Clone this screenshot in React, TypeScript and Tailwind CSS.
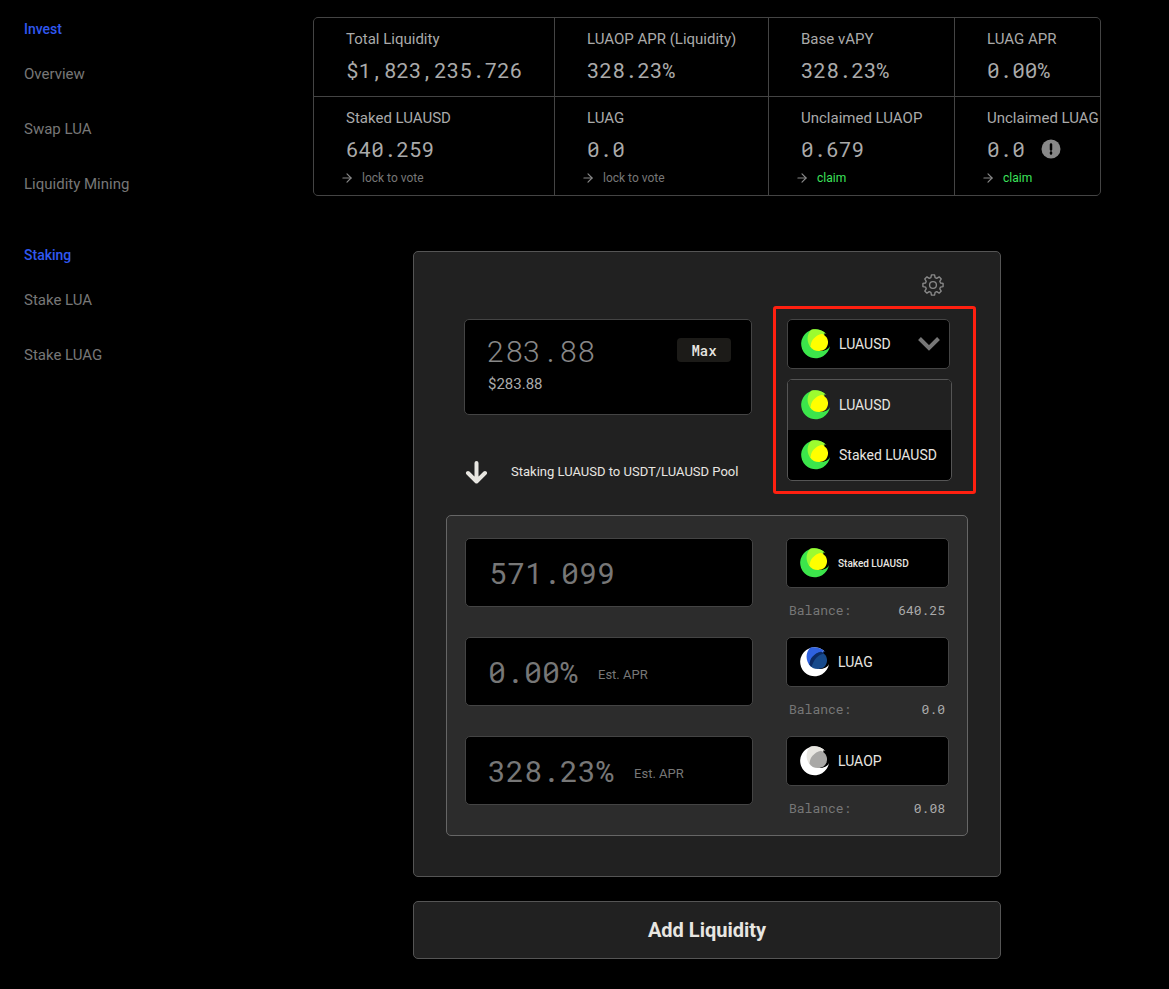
import { useState } from 'react';
import { ArrowRight } from 'lucide-react';

type Coin = 'usd' | 'luag' | 'luaop';

const coinColors = {
  usd: { base: '#3ce54b', mid: '#9cfb30', front: '#ffff00' },
  luag: { base: '#ffffff', mid: '#2f62e0', front: '#174a8c' },
  luaop: { base: '#ffffff', mid: '#e8e6e1', front: '#a9a8a6' },
};

function CoinIcon({ coin }: { coin: Coin }) {
  const { base, mid, front } = coinColors[coin];
  return (
    <svg width="30" height="30" viewBox="0 0 30 30" aria-hidden="true" className="shrink-0">
      <path d="M24 3.700 A14.500 14.500 0 1 0 29 17 C27.500 20.500 24 22 19 22 L14 12 Z" fill={base} />
      <path d="M25.500 4.600 L23 5.500 L20 12 L10.500 19.500 C5.500 14 5 6 10.500 .600 C15 -.600 20.500 .500 24 3.700 L22 4.500 Z" fill={mid} />
      <path d="M9.500 17.500 C10 11 14 6.500 21 4.700 C25 6.500 27.300 10 27 14 C26.500 19 23 22 18 22 C14 22 11 20.500 9.500 17.500 Z" fill={front} />
      {coin === 'luag' && (
        <path d="M9.500 17.500 C10 11 14 6.500 21 4.700 L24 6.500 C18 8 14 12 11.500 20 Z" fill="#0c2a63" />
      )}
    </svg>
  );
}

function GearIcon() {
  return (
    <svg width="22" height="22" viewBox="0 0 24 24" fill="none" stroke="currentColor" strokeWidth="1.5" strokeLinejoin="round" aria-hidden="true">
      <circle cx="12" cy="12" r="3.700" />
      <path d="M10.300 1h3.400l.6 2.900 1.800.8 2.600-1.600 2.300 2.300-1.600 2.600.8 1.800 2.800.5v3.400l-2.800.6-.8 1.800 1.600 2.500-2.300 2.300-2.600-1.600-1.800.8-.6 2.900h-3.400l-.6-2.900-1.800-.8-2.500 1.600-2.400-2.300 1.600-2.500-.7-1.800-2.900-.6v-3.400l2.900-.5.7-1.800-1.600-2.600 2.400-2.300 2.500 1.600 1.800-.8z" />
    </svg>
  );
}

const menu = [
  { title: 'Invest', items: ['Overview', 'Swap LUA', 'Liquidity Mining'] },
  { title: 'Staking', items: ['Stake LUA', 'Stake LUAG'] },
];

function Sidebar() {
  return (
    <nav className="w-[245px] shrink-0 flex flex-col gap-[51px] pl-6 pt-[19px] text-[15px] leading-5">
      {menu.map((group) => (
        <div key={group.title}>
          <h2 className="text-[14px] leading-5 font-medium text-[#3058f0]">{group.title}</h2>
          <ul className="mt-[25px] flex flex-col gap-[35px] text-[#777]">
            {group.items.map((item) => (
              <li key={item}>
                <a href="#">{item}</a>
              </li>
            ))}
          </ul>
        </div>
      ))}
    </nav>
  );
}

const stats = [
  { label: 'Total Liquidity', value: '$1,823,235.726' },
  { label: 'LUAOP APR (Liquidity)', value: '328.23%' },
  { label: 'Base vAPY', value: '328.23%' },
  { label: 'LUAG APR', value: '0.00%' },
  { label: 'Staked LUAUSD', value: '640.259', action: 'lock to vote' },
  { label: 'LUAG', value: '0.0', action: 'lock to vote' },
  { label: 'Unclaimed LUAOP', value: '0.679', action: 'claim' },
  { label: 'Unclaimed LUAG', value: '0.0', action: 'claim', warn: true },
];

function Stats() {
  return (
    <section className="w-full max-w-[788px] grid grid-cols-[240px_213px_185px_1fr] gap-px bg-[#444] border border-[#444] rounded-[5px] overflow-hidden">
      {stats.map((stat) => (
        <div key={stat.label} className="min-w-0 bg-black pl-8 pt-[11px] pb-[9px] whitespace-nowrap">
          <div className="text-[15px] leading-5 text-[#aaa]">{stat.label}</div>
          <div className="mt-[7px] mb-[3px] flex items-center gap-4 font-['Roboto_Mono','Liberation_Mono',monospace] text-[21px] leading-7 text-[#aaa]">
            {stat.value}
            {stat.warn && (
              <svg width="20" height="20" viewBox="0 0 20 20" aria-hidden="true">
                <circle cx="10" cy="10" r="9.500" fill="#888" />
                <path d="M10 5.500v5M10 13.500v1" stroke="#000" strokeWidth="2.500" strokeLinecap="round" />
              </svg>
            )}
          </div>
          {stat.action && (
            <a href="#" className="-ml-[6px] mt-[7px] flex items-center gap-2 text-[12px] leading-4">
              <ArrowRight size={14} className="text-[#888]" />
              <span className={stat.action === 'claim' ? 'text-[#3ce55c]' : 'text-[#777]'}>{stat.action}</span>
            </a>
          )}
        </div>
      ))}
    </section>
  );
}

const tokens = ['LUAUSD', 'Staked LUAUSD'];

function TokenSelect() {
  const [open, setOpen] = useState(true);
  const [token, setToken] = useState('LUAUSD');

  return (
    <div className="relative w-[163px] shrink-0 text-[14px] text-[#e8e6e1]">
      <button
        type="button"
        aria-haspopup="listbox"
        aria-expanded={open}
        onClick={() => setOpen(!open)}
        className="w-full h-[50px] flex items-center gap-2 pl-[13px] pr-[9px] bg-black border border-[#444] rounded-[5px] whitespace-nowrap"
      >
        <CoinIcon coin="usd" />
        {token}
        <svg width="22" height="14" viewBox="0 0 22 14" fill="none" stroke="#777" strokeWidth="4" aria-hidden="true" className="ml-auto">
          <path d="M1.500 1.500 11 11 20.500 1.500" />
        </svg>
      </button>

      {open && (
        <ul role="listbox" aria-label="Token" className="absolute z-10 top-[60px] left-0 w-[165px] bg-black border border-[#555] rounded-[5px] overflow-hidden">
          {tokens.map((name) => (
            <li
              key={name}
              role="option"
              aria-selected={name === token}
              onClick={() => setToken(name)}
              className="h-[50px] flex items-center gap-2 pl-[13px] whitespace-nowrap aria-selected:bg-[#212121]"
            >
              <CoinIcon coin="usd" />
              {name}
            </li>
          ))}
        </ul>
      )}

      {/* Highlight frame */}
      <div className="absolute -left-[14px] -top-[13px] w-[203px] h-[188px] border-3 border-[#ff2010] rounded-[3px] pointer-events-none" />
    </div>
  );
}

const rows: { coin: Coin; name: string; value: string; balance: string; small?: boolean; apr?: boolean }[] = [
  { coin: 'usd', name: 'Staked LUAUSD', value: '571.099', balance: '640.25', small: true },
  { coin: 'luag', name: 'LUAG', value: '0.00%', balance: '0.0', apr: true },
  { coin: 'luaop', name: 'LUAOP', value: '328.23%', balance: '0.08', apr: true },
];

function PoolRows() {
  return (
    <div className="border border-[#666] rounded-[5px] bg-[#2c2c2c] px-[18px] pt-[22px]">
      {rows.map((row) => (
        <div key={row.name} className="flex justify-between">
          <div className="w-[288px] h-[69px] flex items-center gap-5 px-[22px] bg-black border border-[#444] rounded-[5px]">
            {row.apr ? (
              <>
                <span className="font-['Roboto_Mono','Liberation_Mono',monospace] text-[30px] text-[#777]">{row.value}</span>
                <span className="pt-[7px] text-[13px] text-[#777]">Est. APR</span>
              </>
            ) : (
              <input
                aria-label={row.name}
                defaultValue={row.value}
                className="w-full px-px font-['Roboto_Mono','Liberation_Mono',monospace] text-[30px] text-[#777] bg-transparent outline-none"
              />
            )}
          </div>
          <div className="w-[163px] pb-[17px]">
            <div className="h-[50px] flex items-center gap-2 pl-[13px] bg-black border border-[#444] rounded-[5px] text-[#e8e6e1]">
              <CoinIcon coin={row.coin} />
              <span className={row.small ? 'text-[10px] font-medium' : 'text-[14px]'}>{row.name}</span>
            </div>
            <div className="mt-3 pl-[3px] pr-1 flex justify-between font-['Roboto_Mono','Liberation_Mono',monospace] text-[13px] leading-5">
              <span className="text-[#777]">Balance:</span>
              <span className="text-[#aaa]">{row.balance}</span>
            </div>
          </div>
        </div>
      ))}
    </div>
  );
}

function LiquidityForm() {
  return (
    <form className="mt-[55px] w-full max-w-[588px]" onSubmit={(e) => e.preventDefault()}>
      <div className="border border-[#555] rounded-[5px] bg-[#212121] px-8 pt-[22px] pb-10">
        <div className="flex justify-end pr-6">
          <button type="button" aria-label="Settings" className="text-[#888]">
            <GearIcon />
          </button>
        </div>

        <div className="mt-[23px] px-[18px] flex justify-between items-start">
          <div className="w-[288px] h-24 pl-[22px] pr-5 pt-[10px] bg-black border border-[#444] rounded-[5px]">
            <div className="flex items-center justify-between">
              <input
                aria-label="Amount"
                defaultValue="283.88"
                className="w-[180px] h-10 font-['Roboto_Mono','Liberation_Mono',monospace] font-light text-[30px] text-[#888] bg-transparent outline-none"
              />
              <button type="button" className="w-[54px] h-6 rounded-[4px] bg-[#1c1b18] font-['Roboto_Mono','Liberation_Mono',monospace] font-medium text-[14px] text-[#e8e6e1]">
                Max
              </button>
            </div>
            <div className="mt-[2px] pl-px text-[15px] leading-6 text-[#aaa]">$283.88</div>
          </div>
          <TokenSelect />
        </div>

        <div className="mt-[45px] mb-[31px] pl-[18px] h-6 flex items-center gap-[23px] text-[#e8e6e1]">
          <svg width="24" height="24" viewBox="0 0 24 24" fill="none" stroke="currentColor" strokeWidth="4" strokeLinecap="round" strokeLinejoin="round" aria-hidden="true">
            <path d="M12.500 3v18M4 13l8.500 8.500L21 13" />
          </svg>
          <span className="text-[13px]">Staking LUAUSD to USDT/LUAUSD Pool</span>
        </div>

        <PoolRows />
      </div>

      <button type="submit" className="mt-6 w-full h-[58px] border border-[#555] rounded-[5px] bg-[#212121] text-[20px] font-bold text-[#e8e6e1]">
        Add Liquidity
      </button>
    </form>
  );
}

export default function App() {
  return (
    <div className="min-h-screen flex bg-black font-['Roboto',sans-serif]">
      <Sidebar />
      <main className="flex-1 min-w-0 flex flex-col items-center pt-[17px] pb-[30px]">
        <Stats />
        <LiquidityForm />
      </main>
    </div>
  );
}
